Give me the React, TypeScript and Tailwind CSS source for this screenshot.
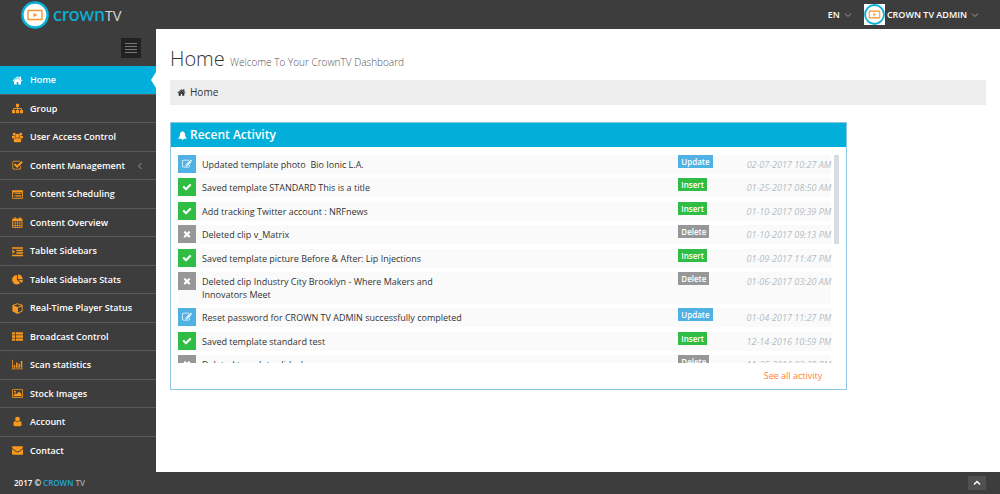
import type { ReactNode } from 'react'

type IconProps = {
  name: IconName
  className?: string
}

const icons = {
  home: {
    box: '0 0 1792 1792',
    body: (
      <path d="M1472 992v480q0 26-19 45t-45 19h-384v-384h-256v384h-384q-26 0-45-19t-19-45v-480q0-1 .5-3t.5-3l575-474 575 474q1 2 1 6zm223-69l-62 74q-8 9-21 11h-3q-13 0-21-7l-692-577-692 577q-12 8-24 7-13-2-21-11l-62-74q-8-10-7-23.5t11-21.5l719-599q32-26 76-26t76 26l244 204v-195q0-14 9-23t23-9h192q14 0 23 9t9 23v408l219 182q10 8 11 21.5t-7 23.5z" />
    ),
  },
  sitemap: {
    box: '0 0 1792 1792',
    body: (
      <path d="M1792 1248v320q0 40-28 68t-68 28h-320q-40 0-68-28t-28-68v-320q0-40 28-68t68-28h96v-192h-512v192h96q40 0 68 28t28 68v320q0 40-28 68t-68 28h-320q-40 0-68-28t-28-68v-320q0-40 28-68t68-28h96v-192h-512v192h96q40 0 68 28t28 68v320q0 40-28 68t-68 28h-320q-40 0-68-28t-28-68v-320q0-40 28-68t68-28h96v-192q0-52 38-90t90-38h512v-192h-96q-40 0-68-28t-28-68v-320q0-40 28-68t68-28h320q40 0 68 28t28 68v320q0 40-28 68t-68 28h-96v192h512q52 0 90 38t38 90v192h96q40 0 68 28t28 68z" />
    ),
  },
  group: {
    box: '0 0 14 14',
    body: (
      <path d="M2.800 1a1.900 1.900 0 1 1 0 3.800 1.900 1.900 0 0 1 0-3.800zM11.200 1a1.900 1.900 0 1 1 0 3.800 1.900 1.900 0 0 1 0-3.800zM7 2.200a2.700 2.700 0 1 1 0 5.400 2.700 2.700 0 0 1 0-5.400zM0 5.200h3.900c0 .9.200 1.600.6 2.100-.8 0-1.500.3-2 .9H1.200C.4 8.200 0 7.700 0 6.900zM14 5.200h-3.900c0 .9-.2 1.600-.6 2.100.8 0 1.500.3 2 .9h1.300c.8 0 1.200-.5 1.200-1.300zM4.200 7.900h5.600c1.400.1 2 1.300 2 3.100 0 1.300-.7 2-2 2H4.200c-1.300 0-2-.7-2-2 0-1.800.6-3 2-3.100z" />
    ),
  },
  checkSquare: {
    box: '0 0 1792 1792',
    body: (
      <path d="M1472 930v318q0 119-84.5 203.5t-203.5 84.5h-832q-119 0-203.5-84.5t-84.5-203.5v-832q0-119 84.5-203.5t203.5-84.5h832q63 0 117 25 15 7 18 23 3 17-9 29l-49 49q-10 10-23 10-3 0-9-2-23-6-45-6h-832q-66 0-113 47t-47 113v832q0 66 47 113t113 47h832q66 0 113-47t47-113v-254q0-13 9-22l64-64q10-10 23-10 6 0 12 3 20 8 20 29zm231-489l-814 814q-24 24-57 24t-57-24l-430-430q-24-24-24-57t24-57l110-110q24-24 57-24t57 24l263 263 647-647q24-24 57-24t57 24l110 110q24 24 24 57t-24 57z" />
    ),
  },
  listAlt: {
    box: '0 0 14 14',
    body: (
      <path
        fillRule="evenodd"
        d="M1.300 1.500h11.400c.7 0 1.300.6 1.300 1.300v8.400c0 .7-.6 1.300-1.300 1.300H1.300C.6 12.500 0 11.900 0 11.200V2.800c0-.7.6-1.300 1.300-1.300zM1 4.500v6.500c0 .3.2.5.5.5h11c.3 0 .5-.2.500-.5V4.500zM2 5.500h1.200v1H2zM4.200 5.500H12v1H4.200zM2 7.500h1.200v1H2zM4.200 7.500H12v1H4.200zM2 9.500h1.200v1H2zM4.200 9.500H12v1H4.200z"
      />
    ),
  },
  calendar: {
    box: '0 0 14 14',
    body: (
      <path
        fillRule="evenodd"
        d="M1.500 2H3V.8c0-.5.300-.8.8-.8s.8.300.8.8V2h4.800V.8c0-.5.300-.8.8-.8s.8.300.8.8V2h1.300c.6 0 1 .4 1 1v10c0 .6-.4 1-1 1h-11c-.6 0-1-.4-1-1V3c0-.6.400-1 1.200-1zM1.500 5v2.200h2.200V5zM4.500 5v2.200h2.200V5zM7.500 5v2.200h2.200V5zM10.500 5v2.200h1.900V5zM1.500 8v2.200h2.200V8zM4.500 8v2.200h2.200V8zM7.500 8v2.200h2.200V8zM10.500 8v2.200h1.900V8zM1.500 11v2h2.200v-2zM4.500 11v2h2.200v-2zM7.500 11v2h2.200v-2zM10.500 11v2h1.900v-2z"
      />
    ),
  },
  indent: {
    box: '0 0 14 14',
    body: (
      <path d="M0 1.500h14v2H0zM5.500 4.700H14v2H5.500zM5.500 7.900H14v2H5.500zM0 11h14v2H0zM.5 4.500L4 7.300.5 10z" />
    ),
  },
  pie: {
    box: '0 0 14 14',
    body: (
      <path d="M6.300 1.200v6.100l4.300 4.300A6.100 6.100 0 1 1 6.300 1.200zM8 7.400h6a6 6 0 0 1-1.800 4.200zM7.500.5a6 6 0 0 1 6 6h-6z" />
    ),
  },
  cube: {
    box: '0 0 14 14',
    body: (
      <path
        fillRule="evenodd"
        d="M7 .2l6.500 2.400v8L7 13.900.5 10.600v-8zM7 1.500L2.200 3.300 7 5.100l4.800-1.800zM7.600 6.200v6l4.700-2.400V4.500z"
      />
    ),
  },
  thList: {
    box: '0 0 14 14',
    body: (
      <path d="M0 1.500h4v3H0zM5 1.500h9v3H5zM0 5.500h4v3H0zM5 5.500h9v3H5zM0 9.500h4v3H0zM5 9.500h9v3H5z" />
    ),
  },
  barChart: {
    box: '0 0 14 14',
    body: (
      <path d="M0 1h1v11h13v1H0zM2.200 7.500h1.900V11H2.200zM5.200 4.500h1.900V11H5.200zM8.200 6h1.900v5H8.200zM11.200 2.500h1.900V11h-1.900z" />
    ),
  },
  picture: {
    box: '0 0 14 14',
    body: (
      <path
        fillRule="evenodd"
        d="M1.200 1.500h11.600c.7 0 1.200.5 1.200 1.200v8.600c0 .7-.5 1.200-1.200 1.200H1.200c-.7 0-1.200-.5-1.200-1.200V2.700c0-.7.5-1.200 1.200-1.200zM1 2.500v9h12v-9zM3.700 3.500a1.300 1.300 0 1 1 0 2.600 1.300 1.300 0 0 1 0-2.600zM2 10.500V9l2.300-2.200 1.200 1.200L9 4.500l3 3v3z"
      />
    ),
  },
  user: {
    box: '0 0 14 14',
    body: (
      <path d="M7 .8a3.100 3.100 0 1 1 0 6.200 3.100 3.100 0 0 1 0-6.200zM4.100 6.300c1.700 1.700 4.100 1.700 5.800 0 1.700.2 2.400 2.300 2.400 4.300 0 1.500-.9 2.400-2.200 2.400H3.900c-1.300 0-2.200-.9-2.200-2.400 0-2 .7-4.100 2.400-4.300z" />
    ),
  },
  envelope: {
    box: '0 0 14 14',
    body: (
      <path d="M1.300 1.500h11.400c.8 0 1.300.5 1.300 1.200 0 .8-.6 1.500-1.200 2L8.300 7.900c-.8.5-1.800.5-2.600 0L1.200 4.700C.5 4.200 0 3.500 0 2.800c0-.8.5-1.300 1.300-1.300zM0 5.200l5.200 3.700c1.200.8 2.400.8 3.600 0L14 5.200v6c0 .7-.6 1.300-1.300 1.300H1.300C.6 12.500 0 11.900 0 11.200z" />
    ),
  },
  bell: {
    box: '0 0 14 14',
    body: (
      <path d="M7 0c.6 0 .9.400.8 1.100 2.100.4 3.200 2 3.200 4.100 0 3 .9 4.700 2.500 6.100 0 .6-.4.900-.9.900H8.700a1.700 1.700 0 0 1-3.400 0H1.400c-.5 0-.9-.3-.9-.9C2.100 9.900 3 8.200 3 5.200c0-2.100 1.100-3.700 3.200-4.100C6.100.4 6.400 0 7 0z" />
    ),
  },
  edit: {
    box: '0 0 1792 1792',
    body: (
      <path d="M888 1184l116-116-152-152-116 116v56h96v96h56zm440-720q-16-16-33 1l-350 350q-17 17-1 33t33-1l350-350q17-17 1-33zm80 594v190q0 119-84.5 203.5t-203.5 84.5h-832q-119 0-203.5-84.5t-84.5-203.5v-832q0-119 84.5-203.5t203.5-84.5h832q63 0 117 25 15 7 18 23 3 17-9 29l-49 49q-14 14-32 8-23-6-45-6h-832q-66 0-113 47t-47 113v832q0 66 47 113t113 47h832q66 0 113-47t47-113v-126q0-13 9-22l64-64q15-15 35-7t20 29zm-96-738l288 288-672 672h-288v-288zm444 132l-92 92-288-288 92-92q28-28 68-28t68 28l152 152q28 28 28 68t-28 68z" />
    ),
  },
  check: {
    box: '0 0 1792 1792',
    body: (
      <path d="M1671 566q0 40-28 68l-724 724-136 136q-28 28-68 28t-68-28l-136-136-362-362q-28-28-28-68t28-68l136-136q28-28 68-28t68 28l294 295 656-657q28-28 68-28t68 28l136 136q28 28 28 68z" />
    ),
  },
  times: {
    box: '0 0 1792 1792',
    body: (
      <path d="M1490 1322q0 40-28 68l-136 136q-28 28-68 28t-68-28l-294-294-294 294q-28 28-68 28t-68-28l-136-136q-28-28-28-68t28-68l294-294-294-294q-28-28-28-68t28-68l136-136q28-28 68-28t68 28l294 294 294-294q28-28 68-28t68 28l136 136q28 28 28 68t-28 68l-294 294 294 294q28 28 28 68z" />
    ),
  },
} satisfies Record<string, { box: string; body: ReactNode }>

type IconName = keyof typeof icons

function Icon({ name, className = '' }: IconProps) {
  return (
    <svg viewBox={icons[name].box} fill="currentColor" aria-hidden="true" className={className}>
      {icons[name].body}
    </svg>
  )
}

type ChevronProps = {
  d: string
  className: string
}

function Chevron({ d, className }: ChevronProps) {
  return (
    <svg viewBox="0 0 8 8" fill="none" stroke="currentColor" aria-hidden="true" className={className}>
      <path d={d} />
    </svg>
  )
}

function LogoMark({ className }: { className: string }) {
  return (
    <svg viewBox="0 0 28 28" fill="none" aria-hidden="true" className={className}>
      <circle cx="14" cy="14" r="12.600" fill="#fff" stroke="#0bb0d8" strokeWidth="2.500" />
      <rect x="7" y="9.500" width="14" height="9" rx="0.500" stroke="#f7942b" strokeWidth="1.400" />
      <path d="M12.500 12l4 2-4 2z" fill="#f7942b" />
    </svg>
  )
}

const menu: { label: string; icon: IconName; active?: boolean; expandable?: boolean }[] = [
  { label: 'Home', icon: 'home', active: true },
  { label: 'Group', icon: 'sitemap' },
  { label: 'User Access Control', icon: 'group' },
  { label: 'Content Management', icon: 'checkSquare', expandable: true },
  { label: 'Content Scheduling', icon: 'listAlt' },
  { label: 'Content Overview', icon: 'calendar' },
  { label: 'Tablet Sidebars', icon: 'indent' },
  { label: 'Tablet Sidebars Stats', icon: 'pie' },
  { label: 'Real-Time Player Status', icon: 'cube' },
  { label: 'Broadcast Control', icon: 'thList' },
  { label: 'Scan statistics', icon: 'barChart' },
  { label: 'Stock Images', icon: 'picture' },
  { label: 'Account', icon: 'user' },
  { label: 'Contact', icon: 'envelope' },
]

const kinds = {
  Update: { icon: 'edit', box: 'bg-[#4fb1e4]' },
  Insert: { icon: 'check', box: 'bg-[#2fbd45]' },
  Delete: { icon: 'times', box: 'bg-[#979797]' },
} as const

const activity: { kind: keyof typeof kinds; text: string; date: string }[] = [
  { kind: 'Update', text: 'Updated template photo  Bio Ionic L.A.', date: '02-07-2017 10:27 AM' },
  { kind: 'Insert', text: 'Saved template STANDARD This is a title', date: '01-25-2017 08:50 AM' },
  { kind: 'Insert', text: 'Add tracking Twitter account : NRFnews', date: '01-10-2017 09:39 PM' },
  { kind: 'Delete', text: 'Deleted clip v_Matrix', date: '01-10-2017 09:13 PM' },
  { kind: 'Insert', text: 'Saved template picture Before & After: Lip Injections', date: '01-09-2017 11:47 PM' },
  {
    kind: 'Delete',
    text: 'Deleted clip Industry City Brooklyn - Where Makers and Innovators Meet',
    date: '01-06-2017 03:20 AM',
  },
  { kind: 'Update', text: 'Reset password for CROWN TV ADMIN successfully completed', date: '01-04-2017 11:27 PM' },
  { kind: 'Insert', text: 'Saved template standard test', date: '12-14-2016 10:59 PM' },
  { kind: 'Delete', text: 'Deleted template slideshow', date: '11-25-2016 03:28 PM' },
]

function Header() {
  return (
    <header className="flex h-[29px] items-center justify-between px-[21px]">
      <a href="#" className="flex items-center gap-1">
        <LogoMark className="size-7" />
        <span className="font-[Lato,sans-serif] text-[19px] leading-6 font-medium text-[#0bb0d8]">
          crown<span className="text-[13px] font-normal text-[#d5d5d5]">TV</span>
        </span>
      </a>
      <div className="flex items-center gap-3 text-[9px] font-semibold text-white">
        <button type="button" className="flex items-center gap-1">
          EN
          <Chevron d="M1 2.500l3 3 3-3" className="size-2 text-[#999]" />
        </button>
        <button type="button" className="flex items-center gap-1">
          <span className="flex items-center gap-0.5">
            <span className="bg-white">
              <LogoMark className="size-[21px]" />
            </span>
            CROWN TV ADMIN
          </span>
          <Chevron d="M1 2.500l3 3 3-3" className="size-2 text-[#999]" />
        </button>
      </div>
    </header>
  )
}

function Sidebar() {
  return (
    <aside className="flex w-[156px] shrink-0 flex-col">
      <div className="flex h-[37px] items-center justify-end pr-[15px]">
        <button type="button" aria-label="Toggle menu" className="bg-[#222] p-1">
          <svg viewBox="0 0 12 12" stroke="#777" aria-hidden="true" className="size-3">
            <path d="M0 1.500h12M0 4.500h12M0 7.500h12M0 10.500h12" />
          </svg>
        </button>
      </div>
      <nav className="flex flex-1 flex-col pb-2 text-[9px] font-semibold text-white">
        {menu.map((item) => (
          <a
            key={item.label}
            href="#"
            className={
              item.active
                ? 'relative flex min-h-7 flex-1 items-center bg-[#02afda] pl-3'
                : 'flex min-h-7 flex-1 items-center border-t border-[#5a5a5a] pl-3'
            }
          >
            <Icon
              name={item.icon}
              className={item.active ? 'size-[11px] text-white' : 'size-[11px] text-[#f8981d]'}
            />
            <span className="ml-[7px] flex-1">{item.label}</span>
            {item.expandable && <Chevron d="M5.500 1l-3 3 3 3" className="mr-3 size-2 text-[#999]" />}
            {item.active && (
              <svg viewBox="0 0 5 16" fill="#fff" aria-hidden="true" className="absolute right-0 h-4 w-[5px]">
                <path d="M5 0v16L0 8z" />
              </svg>
            )}
          </a>
        ))}
      </nav>
    </aside>
  )
}

function RecentActivity() {
  return (
    <section className="mt-[17px] w-[83%] border border-[#8cc8e4]">
      <h2 className="flex h-6 items-center gap-[3px] bg-[#02afda] pl-[7px] text-[12px] font-semibold text-white">
        <Icon name="bell" className="size-[9px]" />
        Recent Activity
      </h2>
      <div className="mx-[7px] mt-2 flex h-[208px] gap-[3px] overflow-hidden">
        <ul className="flex h-[219px] flex-1 flex-col justify-between text-[9px] leading-[13px] text-[#333]">
          {activity.map((row) => (
            <li key={row.date} className="flex items-start bg-[#fafafa]">
              <span className={`flex size-[18px] items-center justify-center text-white ${kinds[row.kind].box}`}>
                <Icon name={kinds[row.kind].icon} className="size-[10px]" />
              </span>
              <p className="w-[266px] py-[3px] pl-1.5 whitespace-pre-wrap">{row.text}</p>
              <span className="flex flex-1 justify-end">
                <span className="w-[33px]">
                  <span
                    className={`block w-fit px-[3px] text-[8px] leading-[13px] font-semibold text-white ${kinds[row.kind].box}`}
                  >
                    {row.kind}
                  </span>
                </span>
              </span>
              <time className="w-[120px] py-[3px] text-right font-medium text-[#b3bec5] italic">{row.date}</time>
            </li>
          ))}
        </ul>
        <div className="h-[89px] w-[5px] bg-[#d6dde2]" />
      </div>
      <p className="flex h-[26px] items-center justify-end pr-6 text-[9px] text-[#ff7f3a]">
        <a href="#">See all activity</a>
      </p>
    </section>
  )
}

function App() {
  return (
    <div className="flex min-h-screen flex-col bg-[#3d3d3d] font-['Open_Sans',sans-serif]">
      <Header />
      <div className="flex flex-1">
        <Sidebar />
        <main className="flex-1 bg-white px-[14px] pt-4">
          <h1 className="text-[20px] leading-7 font-light text-[#333]">
            Home <small className="text-[10px] text-[#555]">Welcome To Your CrownTV Dashboard</small>
          </h1>
          <nav className="mt-1 flex h-[25px] items-center gap-1 bg-[#ededed] pl-[7px] text-[10px] text-[#333]">
            <Icon name="home" className="size-[9px]" />
            <a href="#">Home</a>
          </nav>
          <RecentActivity />
        </main>
      </div>
      <footer className="flex h-[22px] items-center justify-between px-[14px] text-[8px] font-semibold text-white">
        <p>
          2017 ©{' '}
          <a href="#" className="text-[#1ea7d8]">
            CROWN
          </a>{' '}
          <span className="text-[#aaa]">TV</span>
        </p>
        <button type="button" aria-label="Back to top" className="bg-[#505050] px-[5px] py-[3px] text-white">
          <Chevron d="M1 5.500l3-3 3 3" className="size-2 stroke-[1.5]" />
        </button>
      </footer>
    </div>
  )
}

export default App
